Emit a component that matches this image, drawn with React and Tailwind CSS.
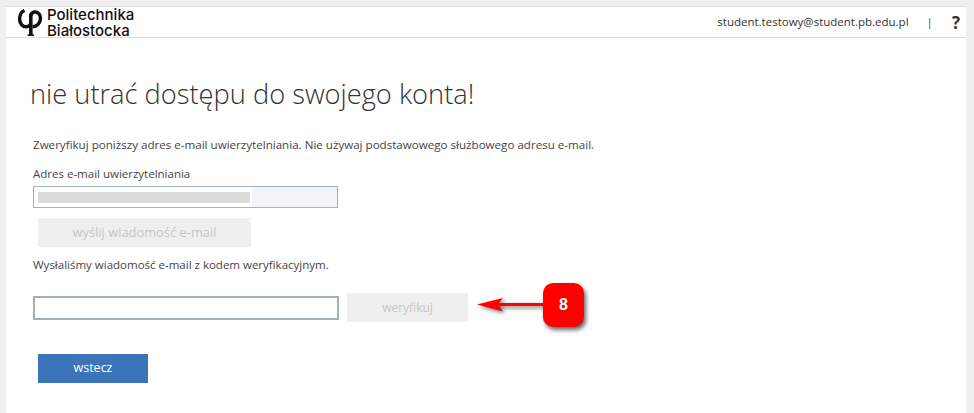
import React from 'react';

const font = { fontFamily: '"Open Sans", "Noto Sans", sans-serif' };

function Logo() {
  return (
    <div className="flex items-start gap-[5px] h-[30px]">
      <svg width="24" height="27" viewBox="0 0 24 27" className="shrink-0 mt-[2px]">
        <path d="M6.5 1.5C3 3 1.6 6.5 1.6 10C1.6 14.5 4.5 17.8 8 17.8C10 17.8 11.5 17 12.5 15" fill="none" stroke="#111" strokeWidth="3.4" />
        <path d="M12.5 6.5C13.5 4 15.5 2.8 17.5 3C20.5 3.3 22.4 6 22.4 9.5C22.4 14.5 18.5 17.8 14.5 17.8" fill="none" stroke="#111" strokeWidth="3.4" />
        <path d="M12.8 5V26" stroke="#111" strokeWidth="3.6" />
        <path d="M9.5 26.2H16" stroke="#111" strokeWidth="1.5" />
      </svg>
      <div className="font-['Inter',Arial,sans-serif] font-medium text-[15px] leading-[16px] text-[#111]">
        <div>Politechnika</div>
        <div>Białostocka</div>
      </div>
    </div>
  );
}

function GreyButton({ children, className }) {
  return (
    <div className={`bg-[#efefef] text-[#c6c6c6] flex items-center justify-center h-[29px] ${className}`}>
      {children}
    </div>
  );
}

export default function App() {
  return (
    <div style={font} className="relative w-[974px] h-[413px] overflow-hidden bg-[#efefef] pt-[6px] pl-[6px] pr-[8px]">
      <div className="bg-white h-[407px] border-t border-[#dedede]">
        <header className="h-[31px] border-b border-[#dedede] flex items-center justify-between pl-[12px] pr-[6px]">
          <Logo />
          <div className="flex items-center text-[11.5px] text-[#333] ml-auto">
            <span>student.testowy@student.pb.edu.pl</span>
            <span className="ml-[18px] text-[#444]">|</span>
            <span className="ml-[19px] text-[17px] font-bold leading-none">?</span>
          </div>
        </header>

        <main className="pl-[24px]">
          <h1 className="mt-[37px] text-[27.25px] leading-[38px] font-light text-[#333]">nie utrać dostępu do swojego konta!</h1>
          <p className="mt-[24px] text-[11.6px] leading-[16px] text-[#444] ml-[3px]">
            Zweryfikuj poniższy adres e-mail uwierzytelniania. Nie używaj podstawowego służbowego adresu e-mail.
          </p>
          <label className="block mt-[13px] text-[11.5px] leading-[16px] text-[#444] ml-[3px]">Adres e-mail uwierzytelniania</label>
          <div className="mt-[4px] ml-[3px] w-[305px] h-[22px] border border-[#a0b4c8] bg-[#f1f5fa] flex items-center">
            <div className="w-[218px] h-[20px] bg-white flex items-center pl-[4px]">
              <div className="w-[212px] h-[11px] bg-[#dcdcdc]"></div>
            </div>
          </div>
          <GreyButton className="mt-[10px] ml-[8px] w-[213px] text-[12.9px]">wyślij wiadomość e-mail</GreyButton>
          <p className="mt-[10px] text-[11.5px] leading-[16px] text-[#444] ml-[3px]">
            Wysłaliśmy wiadomość e-mail z kodem weryfikacyjnym.
          </p>
          <div className="mt-[20px] ml-[3px] flex items-center gap-[8px]">
            <div className="w-[306px] h-[24px] border-2 border-[#a3afbb] bg-white"></div>
            <GreyButton className="w-[121px] text-[12px]">weryfikuj</GreyButton>
          </div>
          <button className="block mt-[32px] ml-[8px] w-[110px] h-[29px] bg-[#3b74b9] text-white text-[12.5px]">wstecz</button>
        </main>
      </div>

      {/* znacznik kroku */}
      <svg width="72" height="24" viewBox="0 0 72 24" className="absolute left-[476px] top-[294px] drop-shadow-[2px_2px_2px_rgba(0,0,0,0.55)]">
        <path d="M1 10.5L27 4L23 9H70V12H23L27 17.5Z" fill="#ff0000" />
      </svg>
      <div className="absolute left-[543px] top-[283px] w-[41px] h-[44px] rounded-[10px] bg-[#ff0000] shadow-[2px_3px_4px_rgba(0,0,0,0.6)] flex items-center justify-center text-white font-bold text-[16px] font-['Liberation_Sans',Arial,sans-serif]">
        8
      </div>
    </div>
  );
}
